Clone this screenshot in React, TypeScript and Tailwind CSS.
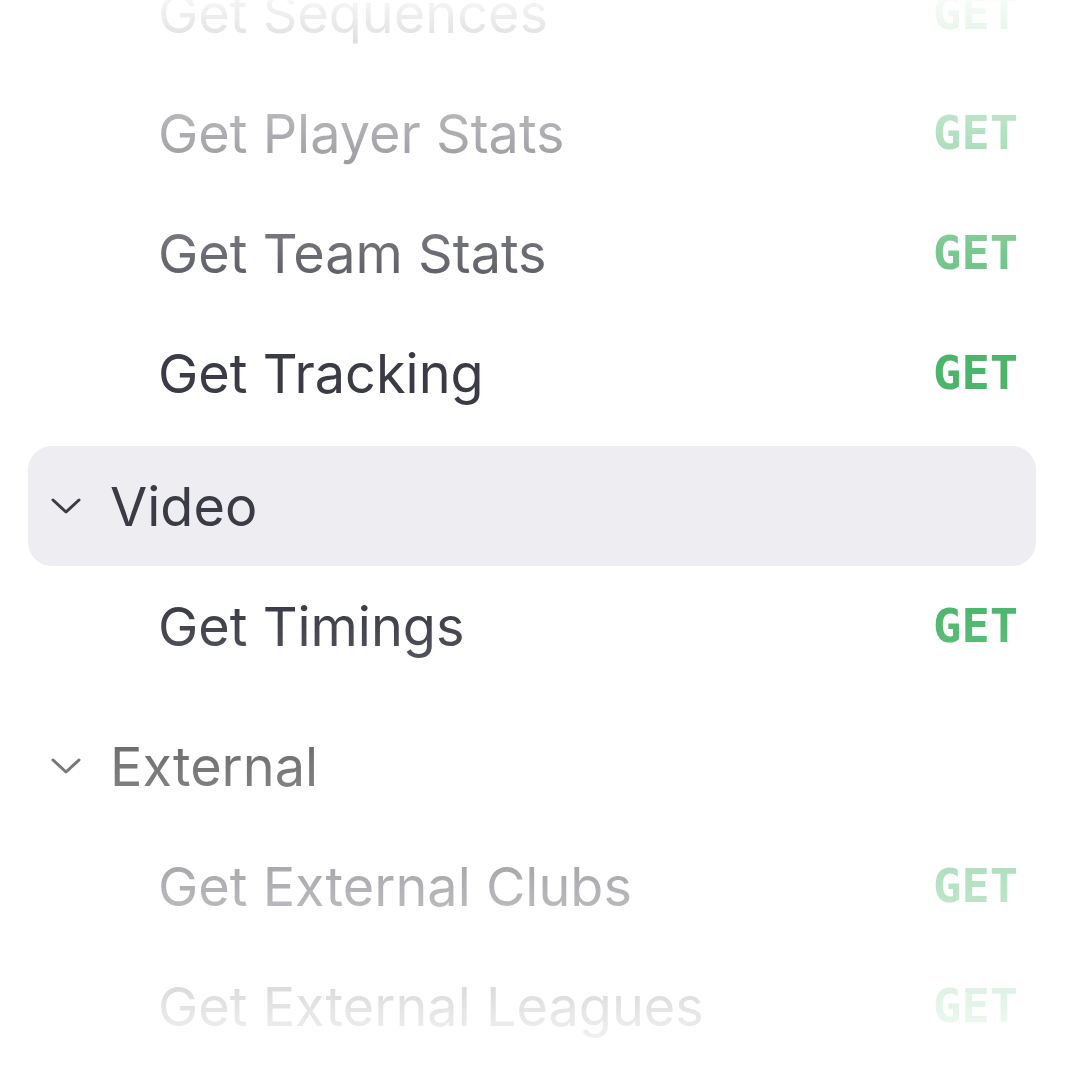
import { ReactNode } from 'react';

type Endpoint = { name: string; method: string };
type Group = { title: string; active?: boolean; items: Endpoint[] };

const before: Endpoint[] = [
  { name: 'Get Sequences', method: 'GET' },
  { name: 'Get Player Stats', method: 'GET' },
  { name: 'Get Team Stats', method: 'GET' },
  { name: 'Get Tracking', method: 'GET' },
];

const groups: Group[] = [
  { title: 'Video', active: true, items: [{ name: 'Get Timings', method: 'GET' }] },
  {
    title: 'External',
    items: [
      { name: 'Get External Clubs', method: 'GET' },
      { name: 'Get External Leagues', method: 'GET' },
    ],
  },
];

const Chevron = () => (
  <svg width="32" height="18" viewBox="0 0 32 18" fill="none" className="shrink-0">
    <path d="M3 3 L16 15 L29 3" stroke="currentColor" strokeWidth="3" strokeLinecap="round" strokeLinejoin="round" />
  </svg>
);

const Row = ({ children, active }: { children: ReactNode; active?: boolean }) => (
  <div className={`flex h-[120px] items-center rounded-[24px] pr-[18px] ${active ? 'bg-[#ededf2]' : ''}`}>
    {children}
  </div>
);

const Item = ({ item }: { item: Endpoint }) => (
  <Row>
    <span className="flex-1 pl-[130px] text-[#3b3b45]">{item.name}</span>
    <span className="font-['DejaVu_Sans_Mono',monospace] text-[47px] font-bold text-[#4cb56b]">{item.method}</span>
  </Row>
);

export default function App() {
  return (
    <div className="h-[1080px] w-[1080px] overflow-hidden bg-white">
      <div className="[mask-image:linear-gradient(to_bottom,transparent_30px,black_390px,black_650px,transparent_1120px)]">
        <div className="-mt-[47px] flex flex-col px-[28px] pr-[44px] font-['Inter',sans-serif] text-[54px]">
          {before.map((item) => (
            <Item key={item.name} item={item} />
          ))}
          {groups.map((g, i) => (
            <div key={g.title} className={i === 0 ? 'mt-[13px]' : 'mt-[20px]'}>
              <Row active={g.active}>
                <div className={`flex items-center gap-[28px] pl-[22px] ${g.active ? 'text-[#3b3b45]' : 'text-[#2f2f2f]'}`}>
                  <Chevron />
                  <span>{g.title}</span>
                </div>
              </Row>
              {g.items.map((item) => (
                <Item key={item.name} item={item} />
              ))}
            </div>
          ))}
        </div>
      </div>
    </div>
  );
}
